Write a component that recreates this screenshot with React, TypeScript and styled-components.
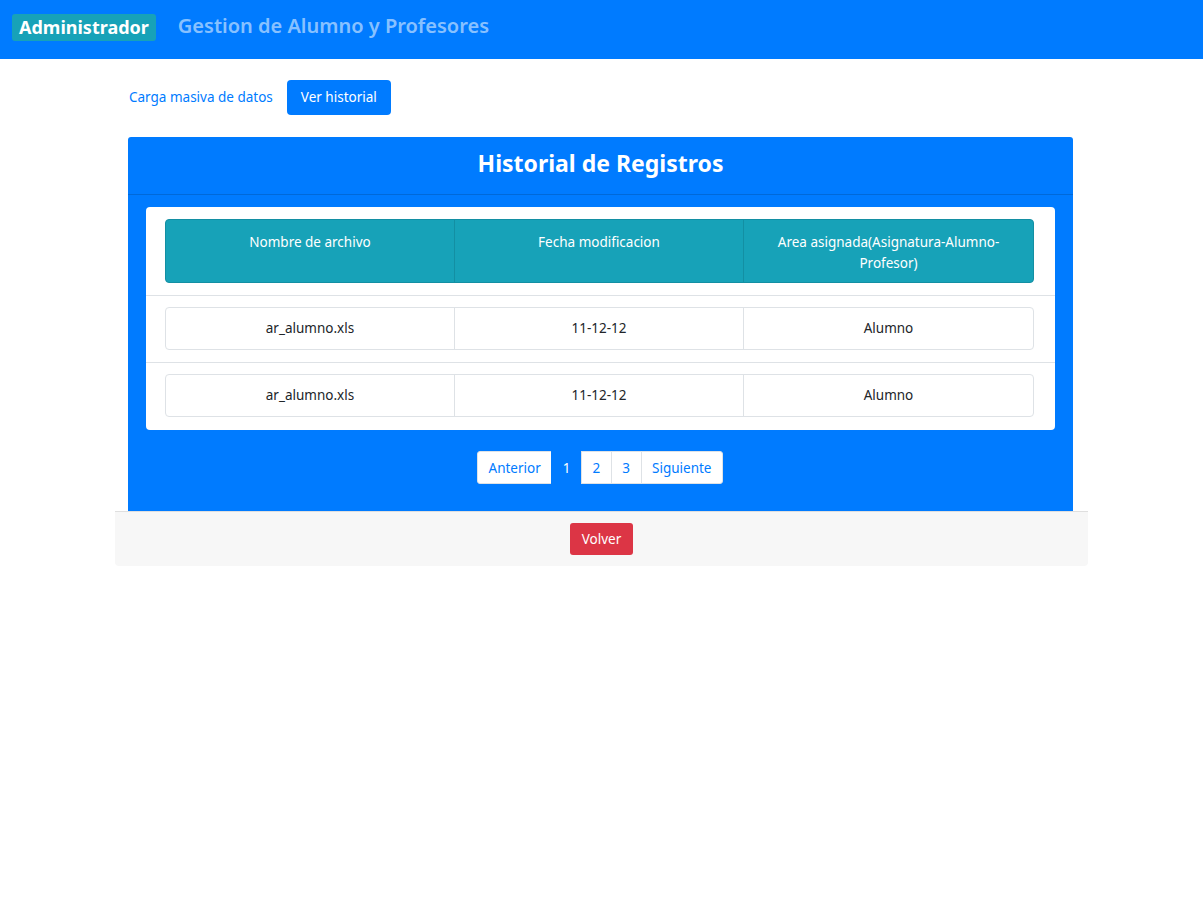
import styled, { createGlobalStyle } from "styled-components";

const GlobalStyle = createGlobalStyle`
  body {
    margin: 0;
    font-family: "Noto Sans", "Open Sans", sans-serif;
    background: #fff;
    color: #212529;
  }
`;

const NavBar = styled.nav`
  height: 59px;
  background-color: #007bff;
  display: flex;
  align-items: center;
  padding: 0 12px;
  gap: 22px;
`;
const Brand = styled.span`
  background-color: #17a2b8;
  color: white;
  font-weight: bold;
  font-size: 18px;
  padding: 0 7px;
  height: 27px;
  line-height: 27px;
  border-radius: 3px;
  margin-top: -5px;
`;
const NavTitle = styled.span`
  color: rgba(255, 255, 255, 0.55);
  font-size: 20px;
  font-weight: 600;
  margin-top: -8px;
`;

const Container = styled.div`
  width: 973px;
  margin: 0 auto;
`;
const Tabs = styled.div`
  display: flex;
  align-items: center;
  gap: 0;
  padding-top: 21px;
`;
const TabLink = styled.a<{ $active?: boolean }>`
  font-size: 13.5px;
  padding: 0 14px;
  height: 35px;
  line-height: 35px;
  border-radius: 4px;
  color: ${(p) => (p.$active ? "#fff" : "#007bff")};
  background: ${(p) => (p.$active ? "#007bff" : "transparent")};
  cursor: pointer;
`;

const Panel = styled.section`
  margin: 22px 15px 0 13px;
  background: #007bff;
  border-radius: 3px 3px 0 0;
  padding-bottom: 27px;
`;
const PanelHeader = styled.h2`
  margin: 0;
  height: 57px;
  line-height: 53px;
  text-align: center;
  color: white;
  font-size: 23px;
  font-weight: bold;
  border-bottom: 1px solid #0069d9;
`;
const TableCard = styled.div`
  margin: 12px 18px 0 18px;
  background: white;
  border-radius: 4px;
  padding-bottom: 1px;
`;
const Row = styled.div<{ $head?: boolean }>`
  padding: ${(p) => (p.$head ? "12px 21px 12px 19px" : "11px 21px 12px 19px")};
  border-bottom: 1px solid #dee2e6;
  &:last-child {
    border-bottom: none;
  }
`;
const Grid = styled.div<{ $head?: boolean }>`
  display: grid;
  grid-template-columns: 1fr 1fr 1fr;
  border: 1px solid ${(p) => (p.$head ? "#138fa3" : "#dee2e6")};
  border-radius: 4px;
  background: ${(p) => (p.$head ? "#17a2b8" : "white")};
  overflow: hidden;
`;
const Cell = styled.div<{ $head?: boolean }>`
  text-align: center;
  font-size: 13.5px;
  color: ${(p) => (p.$head ? "white" : "#212529")};
  padding: ${(p) => (p.$head ? "12px 22px 0" : "0 10px")};
  height: ${(p) => (p.$head ? "62px" : "41px")};
  line-height: ${(p) => (p.$head ? "21px" : "41px")};
  box-sizing: border-box;
  border-right: 1px solid ${(p) => (p.$head ? "#138fa3" : "#dee2e6")};
  &:last-child {
    border-right: none;
  }
`;

const Pager = styled.div`
  display: flex;
  justify-content: center;
  margin-top: 21px;
`;
const PageItem = styled.a<{ $active?: boolean; $pos?: "first" | "last" }>`
  font-size: 13.5px;
  height: 33px;
  line-height: 33px;
  box-sizing: border-box;
  padding: 0 10.5px;
  color: ${(p) => (p.$active ? "white" : "#007bff")};
  background: ${(p) => (p.$active ? "#007bff" : "white")};
  border: 1px solid ${(p) => (p.$active ? "#007bff" : "#dee2e6")};
  margin-left: -1px;
  border-radius: ${(p) =>
    p.$pos === "first" ? "3px 0 0 3px" : p.$pos === "last" ? "0 3px 3px 0" : "0"};
  cursor: pointer;
`;

const Footer = styled.footer`
  background: #f7f7f7;
  border-top: 1px solid #dfdfdf;
  border-radius: 0 0 4px 4px;
  height: 55px;
  box-sizing: border-box;
  display: flex;
  justify-content: center;
  align-items: center;
`;
const DangerButton = styled.button`
  background: #dc3545;
  color: white;
  border: none;
  border-radius: 3px;
  font-family: inherit;
  font-size: 13.5px;
  height: 32px;
  padding: 0 12px;
  cursor: pointer;
`;

const headers = [
  "Nombre de archivo",
  "Fecha modificacion",
  "Area asignada(Asignatura-Alumno-Profesor)",
];
const rows = [
  ["ar_alumno.xls", "11-12-12", "Alumno"],
  ["ar_alumno.xls", "11-12-12", "Alumno"],
];

const App = () => {
  return (
    <>
      <GlobalStyle />
      <NavBar>
        <Brand>Administrador</Brand>
        <NavTitle>Gestion de Alumno y Profesores</NavTitle>
      </NavBar>
      <Container>
        <Tabs>
          <TabLink>Carga masiva de datos</TabLink>
          <TabLink $active>Ver historial</TabLink>
        </Tabs>
        <Panel>
          <PanelHeader>Historial de Registros</PanelHeader>
          <TableCard>
            <Row $head>
              <Grid $head>
                {headers.map((h) => (
                  <Cell $head key={h}>
                    {h}
                  </Cell>
                ))}
              </Grid>
            </Row>
            {rows.map((r, i) => (
              <Row key={i}>
                <Grid>
                  {r.map((c, j) => (
                    <Cell key={j}>{c}</Cell>
                  ))}
                </Grid>
              </Row>
            ))}
          </TableCard>
          <Pager>
            <PageItem $pos="first">Anterior</PageItem>
            <PageItem $active>1</PageItem>
            <PageItem>2</PageItem>
            <PageItem>3</PageItem>
            <PageItem $pos="last">Siguiente</PageItem>
          </Pager>
        </Panel>
        <Footer>
          <DangerButton>Volver</DangerButton>
        </Footer>
      </Container>
    </>
  );
};

export default App;
